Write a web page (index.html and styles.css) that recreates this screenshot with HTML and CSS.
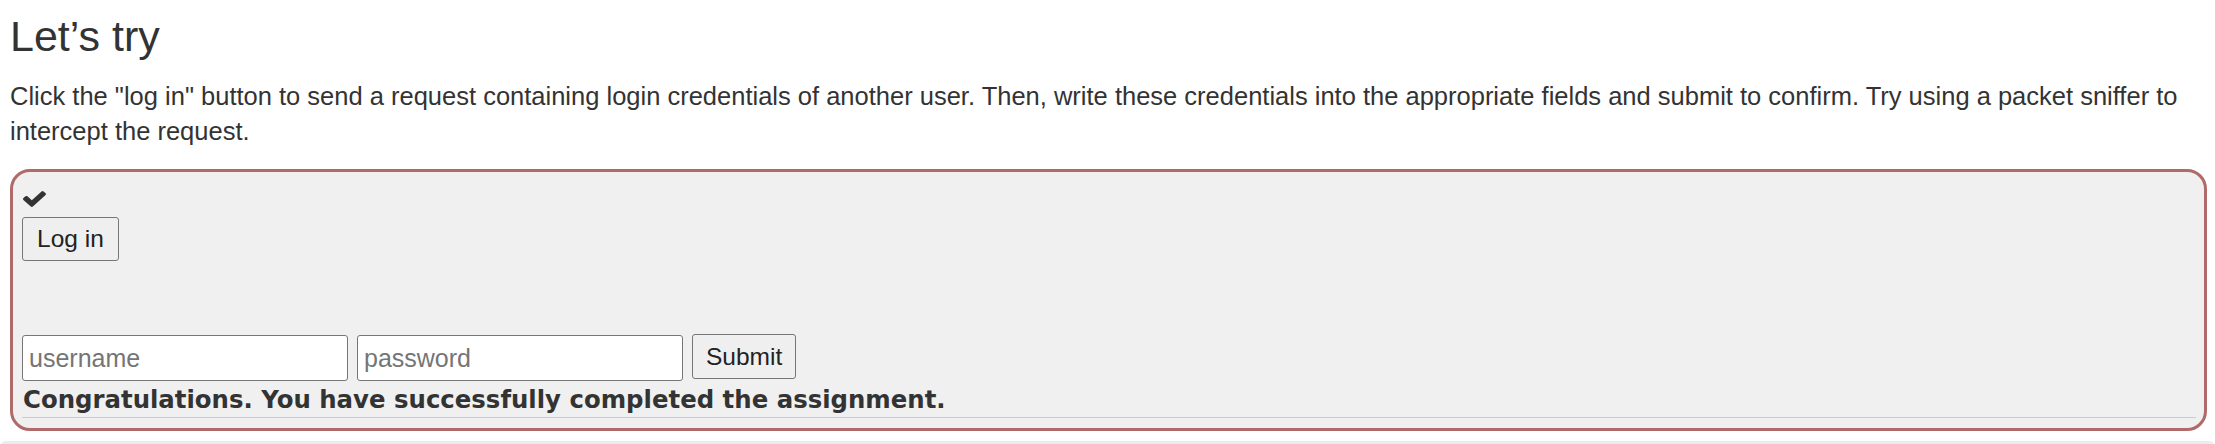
FILE: index.html
```html
<!DOCTYPE html>
<html lang="en">
<head>
  <meta charset="utf-8" />
  <meta name="viewport" content="width=device-width, initial-scale=1" />
  <title>Let’s try</title>
  <link rel="stylesheet" href="styles.css">
</head>
<body>
  <div class="page">
    <h3>Let’s try</h3>
    <p>Click the "log in" button to send a request containing login credentials of another user. Then, write these credentials into the appropriate fields and submit to confirm. Try using a packet sniffer to intercept the request.</p>

    <div class="attack">
      <div class="status">
        <svg class="check" viewBox="121 334 1550 1188" preserveAspectRatio="none" aria-hidden="true">
          <path d="M1671 566q0 40-28 68l-724 724-136 136q-28 28-68 28t-68-28l-136-136-362-362q-28-28-28-68t28-68l136-136q28-28 68-28t68 28l294 295 656-657q28-28 68-28t68 28l136 136q28 28 28 68z"/>
        </svg>
      </div>
      <button class="btn" type="button">Log in</button>
      <div class="feedback"></div>

      <form class="confirm" onsubmit="return false;">
        <input type="text" name="username" placeholder="username">
        <input type="password" name="password" placeholder="password">
        <button class="btn" type="submit">Submit</button>
      </form>
      <div class="output">Congratulations. You have successfully completed the assignment.</div>
      <hr>
    </div>
  </div>
  <div class="next"></div>
</body>
</html>
```

FILE: styles.css
```css
body {
  margin: 0;
  font-family: "Liberation Sans", Arial, sans-serif;
  font-size: 25.5px;
  line-height: 35px;
  color: #333;
  background: #fff;
}
.page {
  padding: 13px 8px 0 10px;
}
h3 {
  margin: 0 0 20px;
  font-size: 43px;
  font-weight: 400;
  line-height: 46px;
}
p {
  margin: 0 0 20px;
}
.attack {
  background: #f0f0f0;
  border: 3px solid #b06a6a;
  border-radius: 20px;
  padding: 10px 8px 10px 9px;
}
.status {
  height: 35px;
  display: flex;
  align-items: center;
  padding-left: 1px;
}
.check {
  width: 23px;
  height: 16px;
  fill: #333;
  margin-top: -2px;
}
.btn {
  display: block;
  font-family: "Liberation Sans", Arial, sans-serif;
  font-size: 24.5px;
  color: #222;
  background: #efefef;
  border: 1px solid #767676;
  border-radius: 3px;
  padding: 7px 14px;
  line-height: 28px;
}
.feedback {
  height: 74px;
}
.confirm {
  display: flex;
  gap: 9px;
  height: 46px;
}
.confirm input {
  width: 326px;
  box-sizing: border-box;
  font-family: "Liberation Sans", Arial, sans-serif;
  font-size: 25px;
  padding: 1px 6px;
  border: 1px solid #767676;
  border-radius: 3px;
  background: #fff;
  margin: 0;
}
.confirm input::placeholder {
  color: #757575;
}
.confirm .btn {
  padding: 0 13px;
  height: 45px;
  margin-top: -1px;
}
.output {
  font-family: "DejaVu Sans", Verdana, sans-serif;
  font-weight: 700;
  font-size: 24.4px;
  line-height: 29px;
  margin-top: 4px;
  padding-left: 1px;
}
hr {
  border: 0;
  border-top: 1px solid #ccc;
  margin: 3px 0 0;
}
.next {
  margin-top: 10px;
  height: 20px;
  background: #ebebf0;
  border-radius: 6px 6px 0 0;
}
```
